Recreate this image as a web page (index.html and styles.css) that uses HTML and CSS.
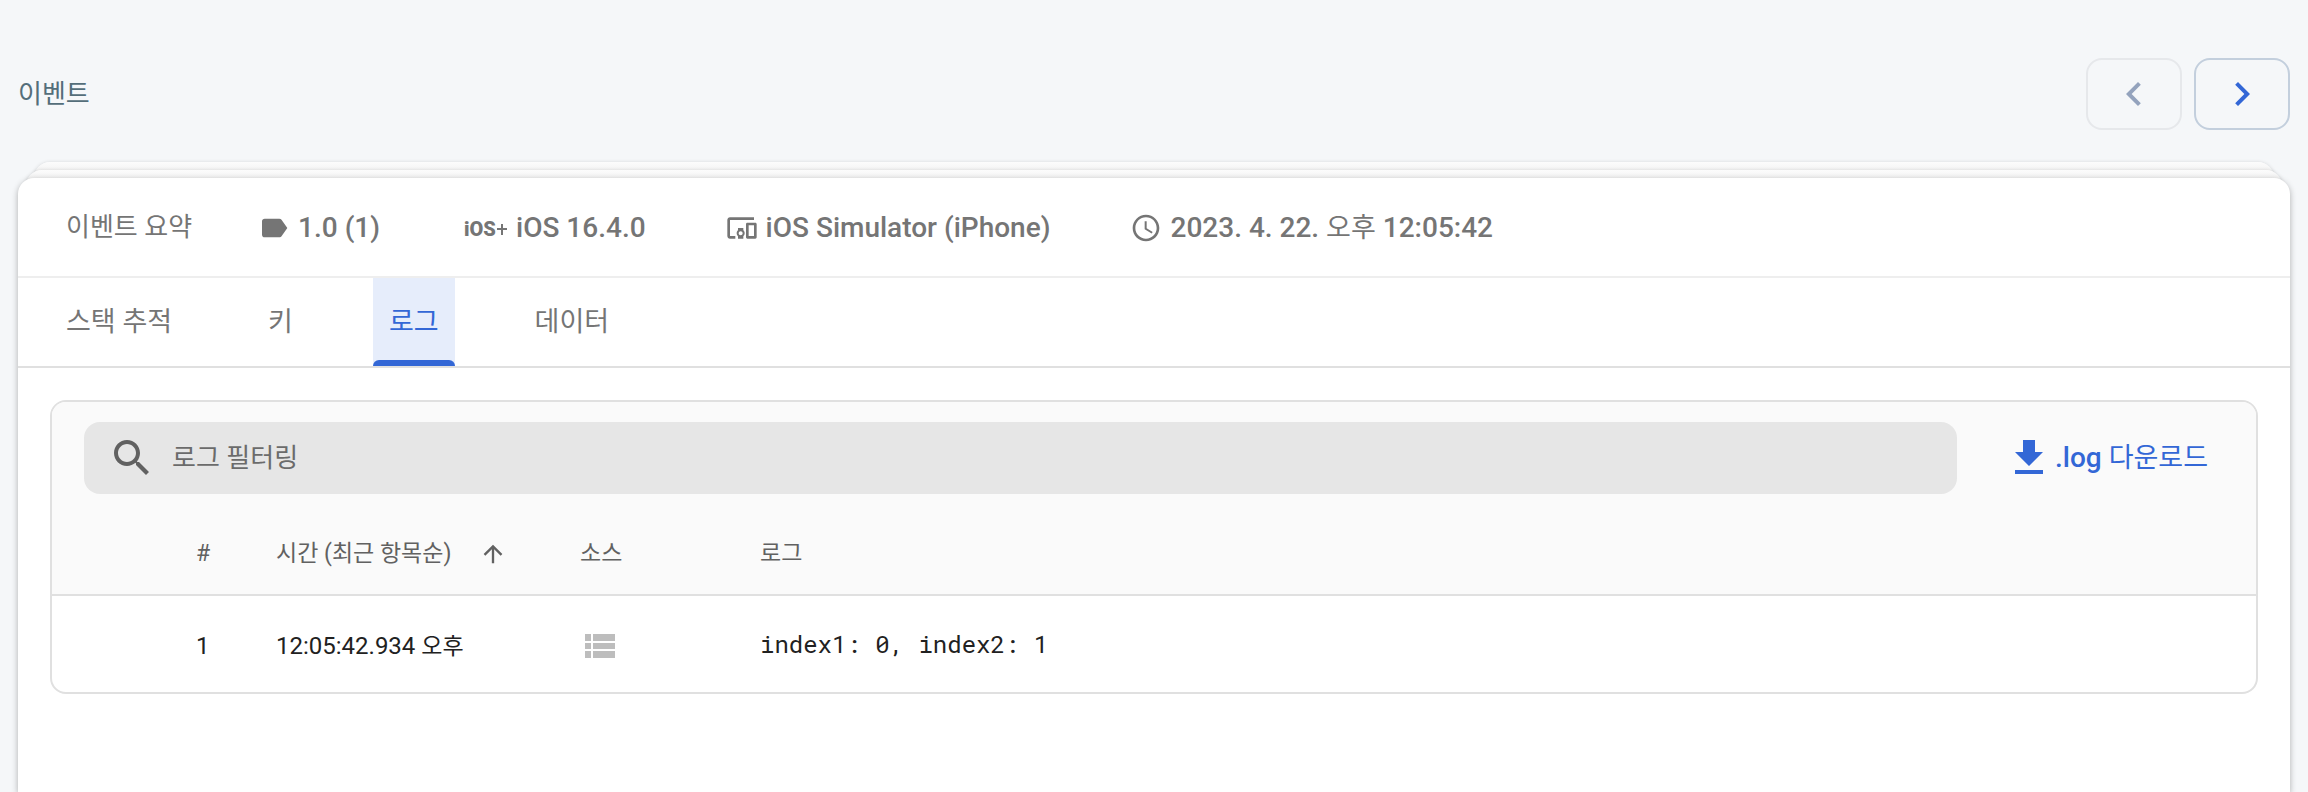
FILE: index.html
```html
<!DOCTYPE html>
<html lang="ko">
<head>
    <meta charset="UTF-8">
    <meta name="viewport" content="width=device-width, initial-scale=1.0">
    <title>이벤트</title>
    <link rel="stylesheet" href="styles.css">
</head>
<body>
    <header class="page-header">
        <h1 class="page-title">이벤트</h1>
        <div class="pager">
            <button type="button" class="pager-btn" aria-label="이전 이벤트" disabled>
                <svg width="48" height="48" viewBox="0 0 24 24"><path d="M15.41 7.41L14 6l-6 6 6 6 1.41-1.41L10.83 12z"/></svg>
            </button>
            <button type="button" class="pager-btn" aria-label="다음 이벤트">
                <svg width="48" height="48" viewBox="0 0 24 24"><path d="M10 6L8.59 7.41 13.17 12l-4.58 4.59L10 18l6-6z"/></svg>
            </button>
        </div>
    </header>

    <main class="stack">
        <div class="sheet sheet-back"></div>
        <div class="sheet sheet-mid"></div>
        <section class="card">
            <div class="summary">
                <h2 class="summary-title">이벤트 요약</h2>
                <ul class="summary-list">
                    <li class="summary-item">
                        <svg width="32" height="32" viewBox="0 0 24 24"><path d="M17.63 5.84C17.27 5.33 16.67 5 16 5L5 5.01C3.9 5.01 3 5.9 3 7v10c0 1.1.9 1.99 2 1.99L16 19c.67 0 1.27-.33 1.63-.84L22 12l-4.37-6.16z"/></svg>
                        <span>1.0 (1)</span>
                    </li>
                    <li class="summary-item">
                        <svg class="os-icon" width="48" height="32" viewBox="0 0 48 32" aria-hidden="true">
                            <text x="4" y="24">iOS</text>
                            <path d="M41 12h2v4h4v2h-4v5h-2v-5h-4v-2h4z"/>
                        </svg>
                        <span>iOS 16.4.0</span>
                    </li>
                    <li class="summary-item">
                        <svg width="32" height="32" viewBox="0 0 24 24"><path d="M3 6h18V4H3c-1.1 0-2 .9-2 2v12c0 1.1.9 2 2 2h4v-2H3V6zm10 6H9v1.78c-.61.55-1 1.33-1 2.22s.39 1.67 1 2.22V20h4v-1.78c.61-.55 1-1.34 1-2.22s-.39-1.67-1-2.22V12zm-2 5.5c-.83 0-1.5-.67-1.5-1.5s.67-1.5 1.5-1.5 1.5.67 1.5 1.5-.67 1.5-1.5 1.5zM22 8h-6c-.5 0-1 .5-1 1v10c0 .5.5 1 1 1h6c.5 0 1-.5 1-1V9c0-.5-.5-1-1-1zm-1 10h-4v-8h4v8z"/></svg>
                        <span>iOS Simulator (iPhone)</span>
                    </li>
                    <li class="summary-item">
                        <svg width="32" height="32" viewBox="0 0 24 24"><path d="M11.99 2C6.47 2 2 6.48 2 12s4.47 10 9.99 10C17.52 22 22 17.52 22 12S17.52 2 11.99 2zM12 20c-4.42 0-8-3.58-8-8s3.58-8 8-8 8 3.58 8 8-3.58 8-8 8zm.5-13H11v6l5.25 3.15.75-1.23-4.5-2.67z"/></svg>
                        <span>2023. 4. 22. <span class="ko">오후</span> 12:05:42</span>
                    </li>
                </ul>
            </div>

            <nav class="tabs" role="tablist">
                <button type="button" class="tab" role="tab" aria-selected="false">스택 추적</button>
                <button type="button" class="tab" role="tab" aria-selected="false">키</button>
                <button type="button" class="tab active" role="tab" aria-selected="true">로그</button>
                <button type="button" class="tab" role="tab" aria-selected="false">데이터</button>
            </nav>

            <div class="panel">
                <div class="toolbar">
                    <label class="search">
                        <svg width="48" height="48" viewBox="0 0 24 24"><path d="M15.5 14h-.79l-.28-.27C15.41 12.59 16 11.11 16 9.5 16 5.91 13.09 3 9.5 3S3 5.91 3 9.5 5.91 16 9.5 16c1.61 0 3.09-.59 4.23-1.57l.27.28v.79l5 4.99L20.49 19l-4.99-5zm-6 0C7.01 14 5 11.99 5 9.5S7.01 5 9.5 5 14 7.01 14 9.5 11.99 14 9.5 14z"/></svg>
                        <input type="text" class="search-input" placeholder="로그 필터링" aria-label="로그 필터링">
                    </label>
                    <button type="button" class="download">
                        <svg width="48" height="48" viewBox="0 0 24 24"><path d="M19 9h-4V3H9v6H5l7 7 7-7zM5 18v2h14v-2H5z"/></svg>
                        <span>.log <span class="ko">다운로드</span></span>
                    </button>
                </div>
                <table class="logs">
                    <thead>
                        <tr>
                            <th class="col-num">#</th>
                            <th class="col-time">
                                <button type="button" class="sort">
                                    시간 (최근 항목순)
                                    <svg width="28" height="28" viewBox="0 0 24 24"><path d="M4 12l1.41 1.41L11 7.83V20h2V7.83l5.58 5.59L20 12l-8-8-8 8z"/></svg>
                                </button>
                            </th>
                            <th class="col-source">소스</th>
                            <th>로그</th>
                        </tr>
                    </thead>
                    <tbody>
                        <tr>
                            <td>1</td>
                            <td>12:05:42.934 <span class="ko-small">오후</span></td>
                            <td>
                                <svg class="source-icon" width="40" height="24" viewBox="0 0 40 24" role="img" aria-label="로그">
                                    <path d="M5 0h6v7H5zM13 0h22v7H13zM5 9h6v6H5zM13 9h22v6H13zM5 17h6v7H5zM13 17h22v7H13z"/>
                                </svg>
                            </td>
                            <td class="message">index1: 0, index2: 1</td>
                        </tr>
                    </tbody>
                </table>
            </div>
        </section>
    </main>
</body>
</html>
```
FILE: styles.css
```css
* {
    box-sizing: border-box;
}

body {
    display: flex;
    flex-direction: column;
    min-height: 100vh;
    margin: 0;
    padding: 58px 18px 0;
    background-color: #f5f7f9;
    color: #212121;
    font-family: Roboto, "Noto Sans CJK KR", sans-serif;
    font-size: 24px;
    line-height: 32px;
}

button {
    padding: 0;
    border: none;
    background: none;
    color: inherit;
    font: inherit;
    cursor: pointer;
}

svg {
    display: block;
    flex: none;
    fill: currentColor;
}

.page-header {
    display: flex;
    align-items: center;
    justify-content: space-between;
    height: 72px;
    margin-bottom: 32px;
}

.page-title {
    margin: 0;
    color: #546e7a;
    font-size: 26px;
    font-weight: 400;
}

.pager {
    display: flex;
    gap: 12px;
}

.pager-btn {
    display: flex;
    align-items: center;
    justify-content: center;
    width: 96px;
    height: 72px;
    border: 2px solid #c3cfdd;
    border-radius: 16px;
    color: #3367d6;
}

.pager-btn:disabled {
    border-color: #e6e8eb;
    color: #94a3bd;
    cursor: default;
}

/* two sheets peek out above the card */
.stack {
    display: flex;
    flex: 1;
    flex-direction: column;
}

.sheet {
    height: 24px;
    margin-bottom: -16px;
    border-radius: 16px 16px 0 0;
    background: linear-gradient(#fcfcfc, #f4f4f4 8px);
    box-shadow: 0 1px 4px rgba(0, 0, 0, 0.2);
}

.sheet-back {
    margin-right: 16px;
    margin-left: 16px;
}

.sheet-mid {
    margin-right: 8px;
    margin-left: 8px;
}

.card {
    flex: 1;
    padding-bottom: 32px;
    border-radius: 16px 16px 0 0;
    background-color: #fff;
    box-shadow: 0 2px 6px rgba(0, 0, 0, 0.3);
}

.sheet,
.card {
    position: relative;
}

.summary {
    display: flex;
    align-items: center;
    gap: 66px;
    height: 100px;
    padding: 0 48px;
    border-bottom: 2px solid #eee;
    color: #757575;
}

.summary-title {
    margin: 0;
    font-size: 26px;
    font-weight: 400;
}

.summary-list {
    display: flex;
    gap: 80px;
    margin: 0;
    padding: 2px 0 0;
    list-style: none;
}

.summary-item {
    display: flex;
    align-items: center;
    gap: 8px;
    font-size: 28px;
    font-weight: 500;
    line-height: 40px;
}

.os-icon text {
    font-family: Roboto, sans-serif;
    font-size: 20px;
    font-weight: 900;
}

.ko {
    font-size: 27px;
    font-weight: 400;
}

.ko-small {
    font-size: 23px;
}

.tabs {
    display: flex;
    gap: 64px;
    padding: 0 32px;
    border-bottom: 2px solid #e0e0e0;
}

.tab {
    position: relative;
    height: 88px;
    padding: 0 16px;
    color: #757575;
    font-size: 27px;
}

.tab.active {
    background-color: #e6edfb;
    color: #3367d6;
}

.tab.active::after {
    content: "";
    position: absolute;
    right: 0;
    bottom: 0;
    left: 0;
    height: 6px;
    border-radius: 6px 6px 0 0;
    background-color: #3367d6;
}

.panel {
    margin: 32px;
    overflow: hidden;
    border: 2px solid #e0e0e0;
    border-radius: 16px;
}

.toolbar {
    display: flex;
    align-items: center;
    gap: 48px;
    padding: 20px 48px 20px 32px;
    background-color: #fafafa;
}

.search {
    display: flex;
    flex: 1;
    align-items: center;
    gap: 16px;
    height: 72px;
    padding: 0 24px;
    border-radius: 16px;
    background-color: #e6e6e6;
    color: #616161;
}

.search-input {
    flex: 1;
    padding: 0;
    border: none;
    outline: none;
    background: none;
    color: #212121;
    font: inherit;
    font-size: 26px;
}

.search-input::placeholder {
    color: #6b6b6b;
    opacity: 1;
}

.download {
    display: flex;
    align-items: center;
    gap: 2px;
    color: #3367d6;
    font-size: 28px;
    font-weight: 500;
}

.logs {
    width: 100%;
    border-collapse: collapse;
    table-layout: fixed;
}

.logs th,
.logs td {
    padding: 0;
    text-align: left;
}

.logs th {
    height: 81px;
    border-bottom: 2px solid #e0e0e0;
    background-color: #fafafa;
    color: #616161;
    font-size: 23px;
    font-weight: 400;
}

.logs td {
    height: 97px;
    padding-top: 4px;
}

.logs th:first-child,
.logs td:first-child {
    padding-left: 144px;
}

.col-num {
    width: 224px;
}

.col-time {
    width: 304px;
}

.col-source {
    width: 180px;
}

.sort {
    display: flex;
    align-items: center;
    gap: 28px;
}

.source-icon {
    color: #bdbdbd;
}

.logs .message {
    padding-top: 0;
    font-family: "Roboto Mono", "DejaVu Sans Mono", monospace;
}
```
